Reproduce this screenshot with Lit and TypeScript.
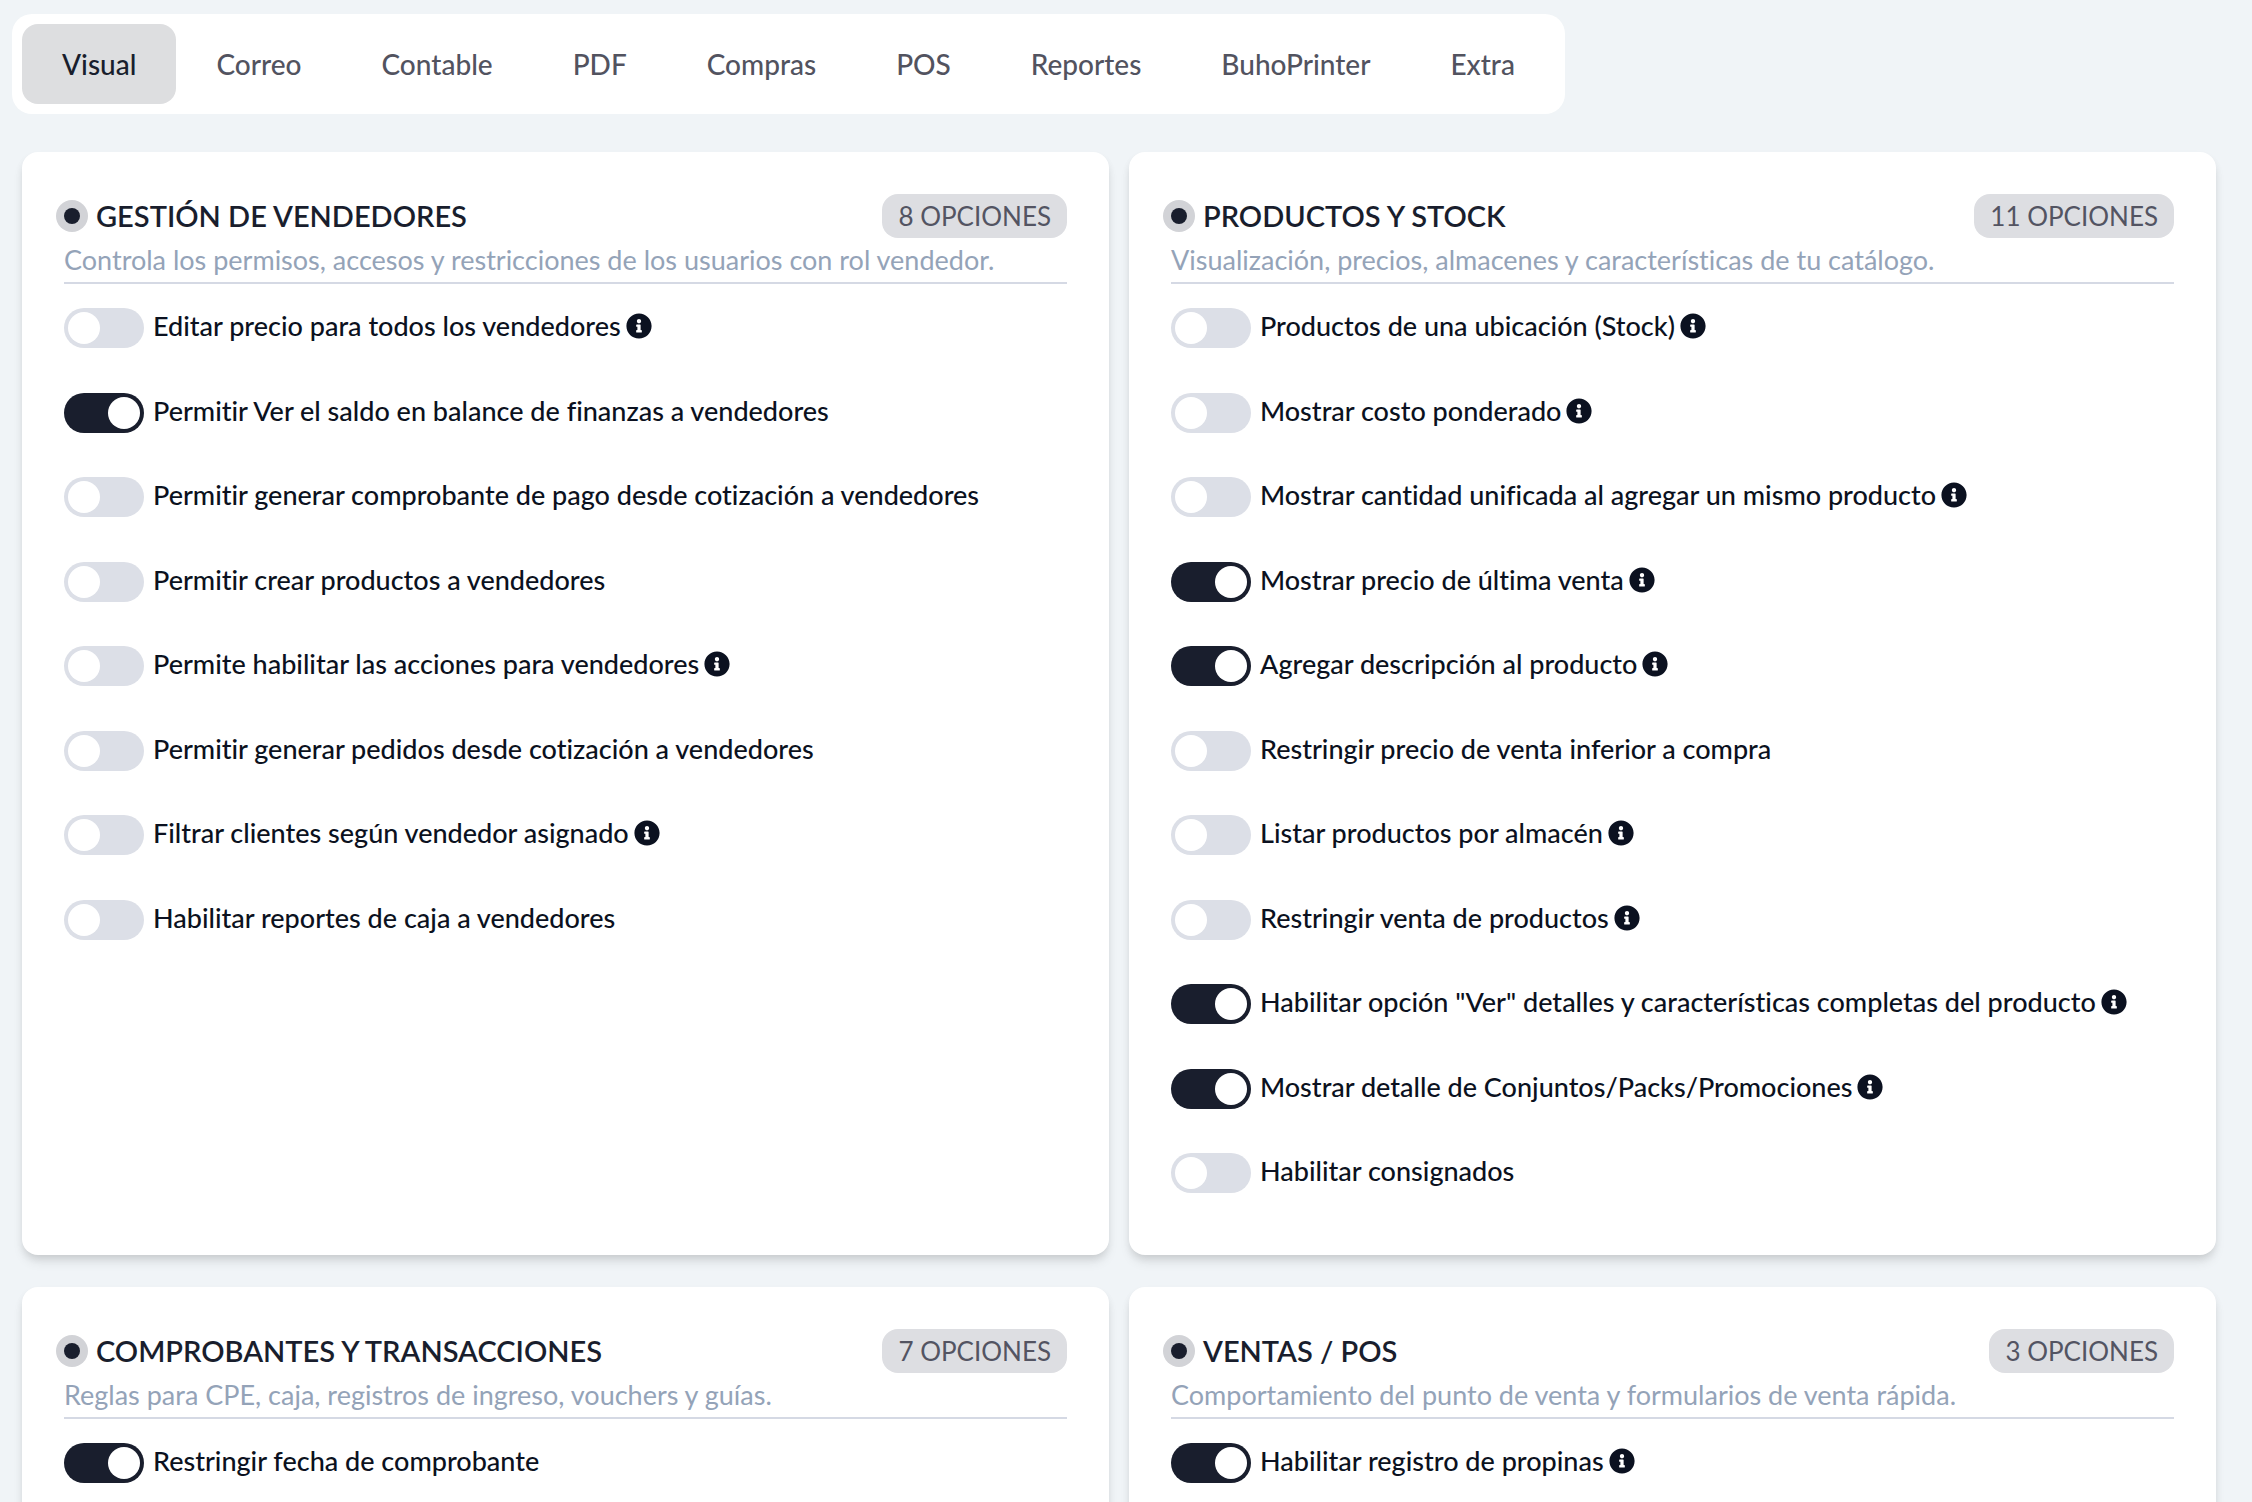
import { LitElement, html, css, svg, nothing } from "lit";
import { customElement, property, state } from "lit/decorators.js";
import { classMap } from "lit/directives/class-map.js";

interface Option {
  label: string;
  on?: boolean;
  info?: boolean;
}

interface Section {
  title: string;
  description: string;
  total: number;
  options: Option[];
}

const TABS = ["Visual", "Correo", "Contable", "PDF", "Compras", "POS", "Reportes", "BuhoPrinter", "Extra"];

const SECTIONS: Section[] = [
  {
    title: "GESTIÓN DE VENDEDORES",
    description: "Controla los permisos, accesos y restricciones de los usuarios con rol vendedor.",
    total: 8,
    options: [
      { label: "Editar precio para todos los vendedores", info: true },
      { label: "Permitir Ver el saldo en balance de finanzas a vendedores", on: true },
      { label: "Permitir generar comprobante de pago desde cotización a vendedores" },
      { label: "Permitir crear productos a vendedores" },
      { label: "Permite habilitar las acciones para vendedores", info: true },
      { label: "Permitir generar pedidos desde cotización a vendedores" },
      { label: "Filtrar clientes según vendedor asignado", info: true },
      { label: "Habilitar reportes de caja a vendedores" },
    ],
  },
  {
    title: "PRODUCTOS Y STOCK",
    description: "Visualización, precios, almacenes y características de tu catálogo.",
    total: 11,
    options: [
      { label: "Productos de una ubicación (Stock)", info: true },
      { label: "Mostrar costo ponderado", info: true },
      { label: "Mostrar cantidad unificada al agregar un mismo producto", info: true },
      { label: "Mostrar precio de última venta", on: true, info: true },
      { label: "Agregar descripción al producto", on: true, info: true },
      { label: "Restringir precio de venta inferior a compra" },
      { label: "Listar productos por almacén", info: true },
      { label: "Restringir venta de productos", info: true },
      { label: 'Habilitar opción "Ver" detalles y características completas del producto', on: true, info: true },
      { label: "Mostrar detalle de Conjuntos/Packs/Promociones", on: true, info: true },
      { label: "Habilitar consignados" },
    ],
  },
  {
    title: "COMPROBANTES Y TRANSACCIONES",
    description: "Reglas para CPE, caja, registros de ingreso, vouchers y guías.",
    total: 7,
    options: [{ label: "Restringir fecha de comprobante", on: true }],
  },
  {
    title: "VENTAS / POS",
    description: "Comportamiento del punto de venta y formularios de venta rápida.",
    total: 3,
    options: [{ label: "Habilitar registro de propinas", on: true, info: true }],
  },
];

const infoIcon = svg`<path fill="currentColor" d="M256 8C119.043 8 8 119.083 8 256c0 136.997 111.043 248 248 248s248-111.003 248-248C504 119.083 392.957 8 256 8zm0 110c23.196 0 42 18.804 42 42s-18.804 42-42 42-42-18.804-42-42 18.804-42 42-42zm56 254c0 6.627-5.373 12-12 12h-88c-6.627 0-12-5.373-12-12v-24c0-6.627 5.373-12 12-12h12v-64h-12c-6.627 0-12-5.373-12-12v-24c0-6.627 5.373-12 12-12h64c6.627 0 12 5.373 12 12v100h12c6.627 0 12 5.373 12 12v24z"/>`;

@customElement("option-switch")
class OptionSwitch extends LitElement {
  @property({ attribute: false }) option!: Option;

  static styles = css`
    :host {
      display: block;
    }
    .row {
      display: flex;
      align-items: flex-start;
      gap: 9px;
      color: #0b1120;
      cursor: pointer;
    }
    .switch {
      appearance: none;
      flex: none;
      display: flex;
      align-items: center;
      box-sizing: border-box;
      width: 80px;
      height: 40px;
      margin: 0;
      padding: 4px;
      border-radius: 20px;
      background: #dcdfe7;
      cursor: pointer;
    }
    .switch::before {
      content: "";
      width: 32px;
      height: 32px;
      border-radius: 50%;
      background: #fff;
    }
    .switch:checked {
      justify-content: flex-end;
      background: #191e2d;
    }
    .text {
      display: flex;
      align-items: center;
      gap: 5px;
      font-size: 27px;
      font-weight: 500;
      line-height: 36px;
    }
    .info {
      flex: none;
      width: 26px;
      height: 26px;
    }
  `;

  render() {
    const { label, on, info } = this.option;
    return html`
      <label class="row">
        <input class="switch" type="checkbox" role="switch" .checked=${!!on} />
        <span class="text">
          ${label}
          ${info ? html`<svg class="info" viewBox="0 0 512 512" aria-hidden="true">${infoIcon}</svg>` : nothing}
        </span>
      </label>
    `;
  }
}

@customElement("option-card")
class OptionCard extends LitElement {
  @property({ attribute: false }) section!: Section;

  static styles = css`
    :host {
      display: block;
      box-sizing: border-box;
      min-width: 0;
      padding: 42px 42px 17px;
      border-radius: 16px;
      background: #fff;
      box-shadow: 0 8px 12px -2px rgba(0, 0, 0, 0.1), 0 4px 8px -2px rgba(0, 0, 0, 0.1);
    }
    .head {
      display: flex;
      align-items: center;
      gap: 16px;
    }
    .dot {
      flex: none;
      width: 16px;
      height: 16px;
      border-radius: 50%;
      background: #191e2d;
      box-shadow: 0 0 0 8px #d2d3d7;
    }
    .title {
      flex: 1;
      margin: 0;
      color: #191e2d;
      font-size: 29px;
      font-weight: 600;
      line-height: 44px;
    }
    .badge {
      padding: 0 16px;
      border-radius: 16px;
      background: #dddee2;
      color: #535462;
      font-size: 26px;
      line-height: 44px;
    }
    .description {
      margin: 0;
      border-bottom: 2px solid #d5d9e4;
      color: #94a3b8;
      font-size: 27px;
      line-height: 44px;
    }
    .list {
      margin: 0;
      padding: 24px 0 0;
      list-style: none;
    }
    .item {
      height: 84px;
    }
    .item:nth-child(odd) {
      height: 85px;
    }
  `;

  render() {
    const { title, description, total, options } = this.section;
    return html`
      <header class="head">
        <span class="dot"></span>
        <h2 class="title">${title}</h2>
        <span class="badge">${total} OPCIONES</span>
      </header>
      <p class="description">${description}</p>
      <ul class="list">
        ${options.map((o) => html`<li class="item"><option-switch .option=${o}></option-switch></li>`)}
      </ul>
    `;
  }
}

@customElement("app-root")
class AppRoot extends LitElement {
  @state() private active = "Visual";

  static styles = css`
    :host {
      display: block;
      box-sizing: border-box;
      height: 100vh;
      overflow: hidden;
      background: #f0f4f7;
      font-family: Lato, "Open Sans", sans-serif;
      font-variant-ligatures: none;
    }
    .tabs {
      display: flex;
      width: fit-content;
      margin: 14px 12px 38px;
      padding: 10px;
      border-radius: 20px;
      background: #fff;
    }
    .tab {
      padding: 0 40px;
      border: 0;
      border-radius: 16px;
      background: none;
      color: #52535f;
      font: inherit;
      font-size: 28px;
      font-weight: 500;
      line-height: 80px;
      cursor: pointer;
    }
    .tab.active {
      background: #dddee0;
      color: #191e2d;
    }
    .cards {
      display: grid;
      grid-template-columns: repeat(2, minmax(0, 1fr));
      grid-auto-rows: minmax(400px, auto);
      gap: 32px 20px;
      padding: 0 36px 32px 22px;
    }
  `;

  render() {
    return html`
      <nav class="tabs" role="tablist">
        ${TABS.map(
          (t) => html`<button
            class=${classMap({ tab: true, active: t === this.active })}
            role="tab"
            aria-selected=${t === this.active}
            @click=${() => (this.active = t)}
          >${t}</button>`
        )}
      </nav>
      <main class="cards">
        ${SECTIONS.map((s) => html`<option-card .section=${s}></option-card>`)}
      </main>
    `;
  }
}
